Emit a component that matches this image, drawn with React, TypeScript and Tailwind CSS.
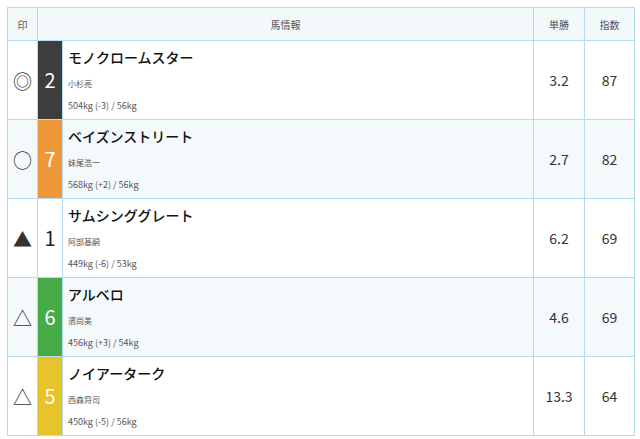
const rows = [
  { mark: "◎", num: "2", box: "bg-[#3d3d3d] text-white", name: "モノクロームスター", jockey: "小杉亮", weight: "504kg (-3) / 56kg", odds: "3.2", idx: "87" },
  { mark: "○", num: "7", box: "bg-[#ef983a] text-white", name: "ベイズンストリート", jockey: "妹尾浩一", weight: "568kg (+2) / 56kg", odds: "2.7", idx: "82" },
  { mark: "▲", num: "1", box: "bg-white text-[#222]", name: "サムシンググレート", jockey: "阿部基嗣", weight: "449kg (-6) / 53kg", odds: "6.2", idx: "69" },
  { mark: "△", num: "6", box: "bg-[#45ac48] text-white", name: "アルベロ", jockey: "濱尚美", weight: "456kg (+3) / 54kg", odds: "4.6", idx: "69" },
  { mark: "△", num: "5", box: "bg-[#e7c42b] text-white", name: "ノイアーターク", jockey: "西森将司", weight: "450kg (-5) / 56kg", odds: "13.3", idx: "64" },
];

export default function App() {
  return (
    <div className="w-[640px] h-[439px] bg-white p-[7px] font-['Noto_Sans_CJK_JP',sans-serif] text-[#333]">
      <table className="w-[628px] border-collapse table-fixed">
        <colgroup>
          <col className="w-[30px]" />
          <col className="w-[25px]" />
          <col />
          <col className="w-[51px]" />
          <col className="w-[50px]" />
        </colgroup>
        <thead>
          <tr className="h-[33px] bg-[#f3f8fb] text-[10px] text-[#555]">
            <th className="border border-[#b4dcee] font-normal">印</th>
            <th colSpan={2} className="border border-[#b4dcee] font-normal">馬情報</th>
            <th className="border border-[#b4dcee] font-normal">単勝</th>
            <th className="border border-[#b4dcee] font-normal">指数</th>
          </tr>
        </thead>
        <tbody>
          {rows.map((r, i) => (
            <tr key={i} className={i % 2 === 1 ? "h-[79px] bg-[#f4f9fc]" : "h-[79px] bg-white"}>
              <td className="border border-[#b4dcee] text-center text-[19px] leading-none text-[#333]">{r.mark}</td>
              <td className={"border border-[#b4dcee] text-center text-[20px] p-0 " + r.box}>{r.num}</td>
              <td className="border border-[#b4dcee] pl-[5px] align-top">
                <div className="flex flex-col pt-[5px]">
                  <span className="text-[14px] font-medium text-[#111] leading-[22px]">{r.name}</span>
                  <span className="text-[8px] text-[#555] mt-[10px] leading-[12px]">{r.jockey}</span>
                  <span className="text-[9px] text-[#555] mt-[10px] leading-[12px]">{r.weight}</span>
                </div>
              </td>
              <td className="border border-[#b4dcee] text-center text-[14px] text-[#333]">{r.odds}</td>
              <td className="border border-[#b4dcee] text-center text-[14px] text-[#333]">{r.idx}</td>
            </tr>
          ))}
        </tbody>
      </table>
    </div>
  );
}
